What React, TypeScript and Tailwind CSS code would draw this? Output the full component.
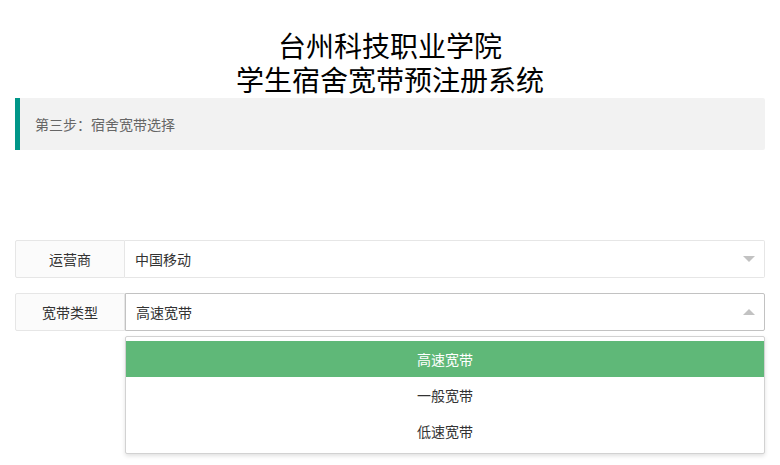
import React from "react";

const font = { fontFamily: '"Noto Sans CJK SC", "Noto Sans", sans-serif' };

function Arrow({ up }: { up?: boolean }) {
  return (
    <span
      className={
        up
          ? "absolute right-[10px] top-[16px] h-0 w-0 border-x-[6px] border-b-[6px] border-x-transparent border-b-[#c2c2c2]"
          : "absolute right-[10px] top-[16px] h-0 w-0 border-x-[6px] border-t-[6px] border-x-transparent border-t-[#c2c2c2]"
      }
    />
  );
}

export default function App() {
  const options = ["高速宽带", "一般宽带", "低速宽带"];
  return (
    <div className="min-h-[465px] bg-white px-[15px] text-[14px] text-[#333]" style={font}>
      <h1 className="flex flex-col items-center pt-[28px] text-[28px] font-normal text-black">
        <span className="block h-[34px] leading-[34px]">台州科技职业学院</span>
        <span className="block h-[34px] leading-[34px]">学生宿舍宽带预注册系统</span>
      </h1>

      <div className="mt-[2px] rounded-r-[2px] border-l-[5px] border-[#009688] bg-[#f2f2f2] p-[15px] text-[14px] leading-[22px] text-[#666]">
        第三步：宿舍宽带选择
      </div>

      <form className="mt-[90px] flex flex-col gap-[15px]">
        <div className="flex">
          <label className="h-[38px] w-[110px] shrink-0 rounded-l-[2px] border border-[#e6e6e6] bg-[#fbfbfb] text-center leading-[36px]">
            运营商
          </label>
          <div className="relative flex-1">
            <div className="h-[38px] rounded-r-[2px] border border-l-0 border-[#e6e6e6] bg-white pl-[10px] leading-[36px]">
              中国移动
            </div>
            <Arrow />
          </div>
        </div>

        <div className="flex">
          <label className="h-[38px] w-[110px] shrink-0 rounded-l-[2px] border border-[#e6e6e6] bg-[#fbfbfb] text-center leading-[36px]">
            宽带类型
          </label>
          <div className="relative flex-1">
            <div className="h-[38px] rounded-r-[2px] border border-[#c2c2c2] bg-white pl-[10px] leading-[36px]">
              高速宽带
            </div>
            <Arrow up />
            <dl className="absolute left-0 right-0 top-[43px] z-10 rounded-[2px] border border-[#d2d2d2] bg-white py-[4px] shadow-[0_2px_4px_rgba(0,0,0,0.12)]">
              {options.map((o, i) => (
                <dd
                  key={o}
                  className={
                    i === 0
                      ? "h-[36px] bg-[#5fb878] text-center leading-[36px] text-white"
                      : "h-[36px] text-center leading-[36px] text-[#333]"
                  }
                >
                  {o}
                </dd>
              ))}
            </dl>
          </div>
        </div>
      </form>
    </div>
  );
}
